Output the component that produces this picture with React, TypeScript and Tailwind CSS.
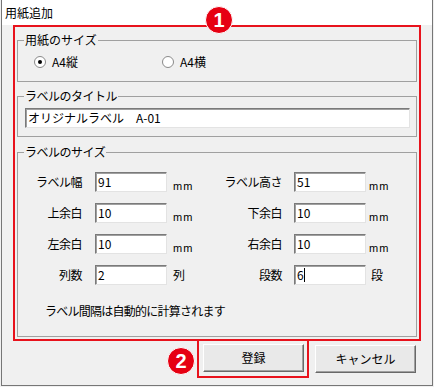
import React from "react"

const Badge = ({ n, className = "" }: { n: string; className?: string }) => (
    <div className={`w-[28px] h-[28px] rounded-full bg-[#e60012] border border-white flex items-center justify-center text-white font-['Liberation_Sans',sans-serif] font-bold text-[20px] leading-none ${className}`}>
        {n}
    </div>
)

const Field = ({ value, caret = false, className = "w-[72px]" }: { value: string; caret?: boolean; className?: string }) => (
    <div className={`h-[20px] bg-white border border-t-[#7a7a7a] border-l-[#7a7a7a] border-b-[#e3e3e3] border-r-[#e3e3e3] shadow-[inset_1px_1px_0_#a0a0a0] pl-[2px] flex items-center leading-[18px] ${className}`}>
        <span>{value}</span>
        {caret && <span className="w-[1px] h-[14px] bg-black" />}
    </div>
)

const Radio = ({ checked, label }: { checked: boolean; label: string }) => (
    <div className="flex items-center gap-[6px]">
        <div className="w-[12px] h-[12px] rounded-full bg-white border border-[#8a8a8a] flex items-center justify-center">
            {checked && <div className="w-[4px] h-[4px] rounded-full bg-black" />}
        </div>
        <span>{label}</span>
    </div>
)

const Button = ({ label }: { label: string }) => (
    <div className="w-[101px] h-[28px] bg-[#e9e9e9] border border-t-white border-l-white border-b-[#696969] border-r-[#696969] shadow-[inset_-1px_-1px_0_#a0a0a0] flex items-center justify-center">
        {label}
    </div>
)

type Row = { l: string; lv: string; lu: string; r: string; rv: string; ru: string; caret?: boolean }

const rows: Row[] = [
    { l: "ラベル幅", lv: "91", lu: "mm", r: "ラベル高さ", rv: "51", ru: "mm" },
    { l: "上余白", lv: "10", lu: "mm", r: "下余白", rv: "10", ru: "mm" },
    { l: "左余白", lv: "10", lu: "mm", r: "右余白", rv: "10", ru: "mm" },
    { l: "列数", lv: "2", lu: "列", r: "段数", rv: "6", ru: "段", caret: true },
]

const Unit = ({ u, className }: { u: string; className: string }) =>
    u === "mm" ? (
        <span className={`self-end text-[11px] leading-[11px] tracking-[1px] font-['Liberation_Sans',sans-serif] ${className}`}>{u}</span>
    ) : (
        <span className={`self-center ${className}`}>{u}</span>
    )

export default function App() {
    return (
        <div className="w-[434px] h-[387px] bg-[#f0f0f0] text-black text-[12px] font-['Noto_Sans_CJK_JP',sans-serif]">
            <div className="ml-[1px] w-[432px] h-[386px] border-x border-b border-[#767676] bg-[#f0f0f0] flex flex-col">
                {/* title bar */}
                <div className="h-[25px] shrink-0 bg-white pl-[3px] flex items-center text-[12px]">用紙追加</div>

                {/* annotated form area */}
                <div className="relative ml-[11px] w-[408px] h-[316px] shrink-0 border-2 border-[#e8121c] px-[2px] flex flex-col">
                    <Badge n="1" className="absolute left-[190px] top-[-21px] z-10" />

                    {/* 用紙のサイズ */}
                    <fieldset className="mt-[6px] border border-[#a0a0a0] pb-[12px]">
                        <legend className="ml-[6px] px-[1px] leading-[14px]">用紙のサイズ</legend>
                        <div className="mt-[8px] pl-[16px] h-[14px] flex items-center">
                            <div className="w-[128px]">
                                <Radio checked label="A4縦" />
                            </div>
                            <Radio checked={false} label="A4横" />
                        </div>
                    </fieldset>

                    {/* ラベルのタイトル */}
                    <fieldset className="mt-[7px] border border-[#a0a0a0] pb-[8px]">
                        <legend className="ml-[6px] px-[1px] leading-[14px] tracking-[-0.5px]">ラベルのタイトル</legend>
                        <div className="mt-[5px] pl-[7px] pr-[6px]">
                            <Field value="オリジナルラベル　A-01" className="w-full" />
                        </div>
                    </fieldset>

                    {/* ラベルのサイズ */}
                    <fieldset className="mt-[8px] border border-[#a0a0a0] pb-[18px]">
                        <legend className="ml-[6px] px-[1px] leading-[14px] tracking-[-0.5px]">ラベルのサイズ</legend>
                        <div className="mt-[13px] flex flex-col gap-[11px]">
                            {rows.map((r) => (
                                <div key={r.l} className="h-[20px] pl-[7px] flex items-center whitespace-nowrap">
                                    <span className="w-[57px] text-right tracking-[-0.5px]">{r.l}</span>
                                    <Field value={r.lv} className="ml-[13px] w-[72px]" />
                                    <div className="w-[50px] h-full flex">
                                        <Unit u={r.lu} className="pl-[6px]" />
                                    </div>
                                    <span className="w-[65px] text-right tracking-[-0.5px]">{r.r}</span>
                                    <Field value={r.rv} caret={r.caret} className="ml-[12px] w-[72px]" />
                                    <div className="h-full flex">
                                        <Unit u={r.ru} className={r.ru === "mm" ? "pl-[3px]" : "pl-[5px]"} />
                                    </div>
                                </div>
                            ))}
                        </div>
                        <div className="mt-[19px] pl-[27px] leading-[14px] tracking-[-0.75px]">ラベル間隔は自動的に計算されます</div>
                    </fieldset>
                </div>

                {/* buttons */}
                <div className="-mt-[2px] pr-[16px] flex items-center justify-end">
                    <Badge n="2" className="self-end mb-[3px] mr-[2px]" />
                    <div className="border-2 border-[#e8121c] pl-[4px] pr-[3px] pt-[3px] pb-[4px]">
                        <Button label="登録" />
                    </div>
                    <div className="ml-[6px]">
                        <Button label="キャンセル" />
                    </div>
                </div>
            </div>
        </div>
    )
}
